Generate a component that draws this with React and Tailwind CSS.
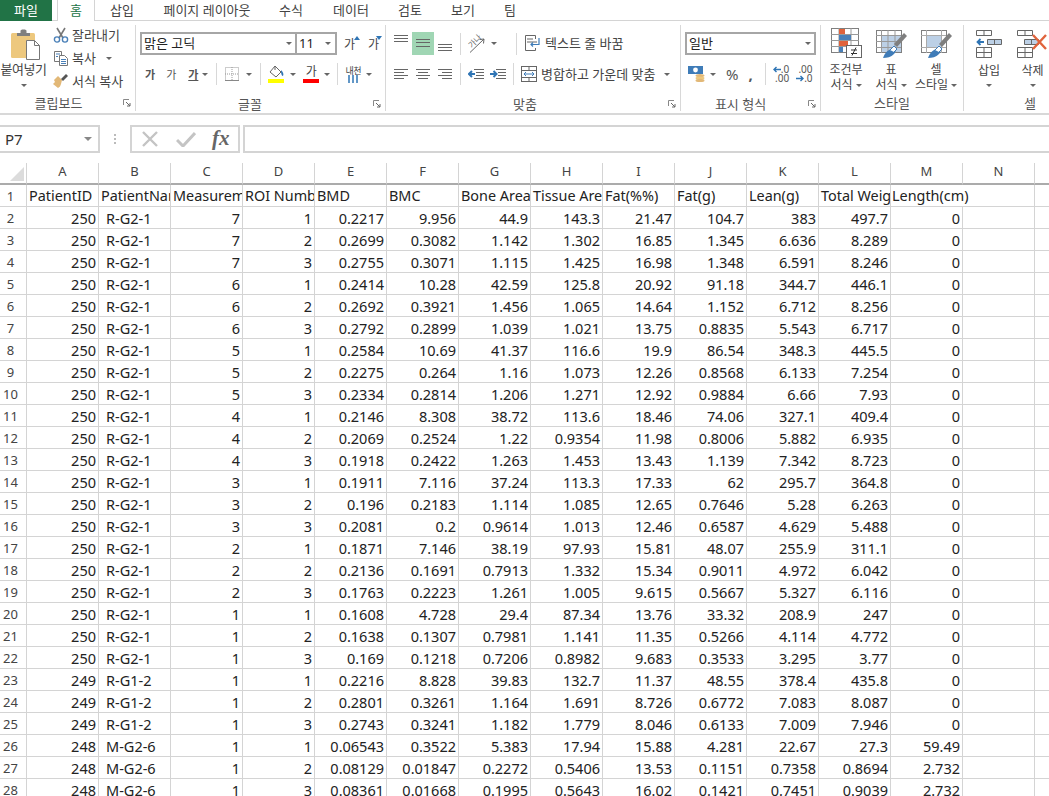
import React from "react";

const cols = ["A", "B", "C", "D", "E", "F", "G", "H", "I", "J", "K", "L", "M", "N"];
const headers = ["PatientID", "PatientName", "Measurement", "ROI Number", "BMD", "BMC", "Bone Area", "Tissue Area", "Fat(%%)", "Fat(g)", "Lean(g)", "Total Weight", "Length(cm)"];

const rows = [
  [250, "R-G2-1", 7, 1, "0.2217", "9.956", "44.9", "143.3", "21.47", "104.7", "383", "497.7", "0"],
  [250, "R-G2-1", 7, 2, "0.2699", "0.3082", "1.142", "1.302", "16.85", "1.345", "6.636", "8.289", "0"],
  [250, "R-G2-1", 7, 3, "0.2755", "0.3071", "1.115", "1.425", "16.98", "1.348", "6.591", "8.246", "0"],
  [250, "R-G2-1", 6, 1, "0.2414", "10.28", "42.59", "125.8", "20.92", "91.18", "344.7", "446.1", "0"],
  [250, "R-G2-1", 6, 2, "0.2692", "0.3921", "1.456", "1.065", "14.64", "1.152", "6.712", "8.256", "0"],
  [250, "R-G2-1", 6, 3, "0.2792", "0.2899", "1.039", "1.021", "13.75", "0.8835", "5.543", "6.717", "0"],
  [250, "R-G2-1", 5, 1, "0.2584", "10.69", "41.37", "116.6", "19.9", "86.54", "348.3", "445.5", "0"],
  [250, "R-G2-1", 5, 2, "0.2275", "0.264", "1.16", "1.073", "12.26", "0.8568", "6.133", "7.254", "0"],
  [250, "R-G2-1", 5, 3, "0.2334", "0.2814", "1.206", "1.271", "12.92", "0.9884", "6.66", "7.93", "0"],
  [250, "R-G2-1", 4, 1, "0.2146", "8.308", "38.72", "113.6", "18.46", "74.06", "327.1", "409.4", "0"],
  [250, "R-G2-1", 4, 2, "0.2069", "0.2524", "1.22", "0.9354", "11.98", "0.8006", "5.882", "6.935", "0"],
  [250, "R-G2-1", 4, 3, "0.1918", "0.2422", "1.263", "1.453", "13.43", "1.139", "7.342", "8.723", "0"],
  [250, "R-G2-1", 3, 1, "0.1911", "7.116", "37.24", "113.3", "17.33", "62", "295.7", "364.8", "0"],
  [250, "R-G2-1", 3, 2, "0.196", "0.2183", "1.114", "1.085", "12.65", "0.7646", "5.28", "6.263", "0"],
  [250, "R-G2-1", 3, 3, "0.2081", "0.2", "0.9614", "1.013", "12.46", "0.6587", "4.629", "5.488", "0"],
  [250, "R-G2-1", 2, 1, "0.1871", "7.146", "38.19", "97.93", "15.81", "48.07", "255.9", "311.1", "0"],
  [250, "R-G2-1", 2, 2, "0.2136", "0.1691", "0.7913", "1.332", "15.34", "0.9011", "4.972", "6.042", "0"],
  [250, "R-G2-1", 2, 3, "0.1763", "0.2223", "1.261", "1.005", "9.615", "0.5667", "5.327", "6.116", "0"],
  [250, "R-G2-1", 1, 1, "0.1608", "4.728", "29.4", "87.34", "13.76", "33.32", "208.9", "247", "0"],
  [250, "R-G2-1", 1, 2, "0.1638", "0.1307", "0.7981", "1.141", "11.35", "0.5266", "4.114", "4.772", "0"],
  [250, "R-G2-1", 1, 3, "0.169", "0.1218", "0.7206", "0.8982", "9.683", "0.3533", "3.295", "3.77", "0"],
  [249, "R-G1-2", 1, 1, "0.2216", "8.828", "39.83", "132.7", "11.37", "48.55", "378.4", "435.8", "0"],
  [249, "R-G1-2", 1, 2, "0.2801", "0.3261", "1.164", "1.691", "8.726", "0.6772", "7.083", "8.087", "0"],
  [249, "R-G1-2", 1, 3, "0.2743", "0.3241", "1.182", "1.779", "8.046", "0.6133", "7.009", "7.946", "0"],
  [248, "M-G2-6", 1, 1, "0.06543", "0.3522", "5.383", "17.94", "15.88", "4.281", "22.67", "27.3", "59.49"],
  [248, "M-G2-6", 1, 2, "0.08129", "0.01847", "0.2272", "0.5406", "13.53", "0.1151", "0.7358", "0.8694", "2.732"],
  [248, "M-G2-6", 1, 3, "0.08361", "0.01668", "0.1995", "0.5643", "16.02", "0.1421", "0.7451", "0.9039", "2.732"],
];

const tabs = [
  ["삽입", "w-[54px]"],
  ["페이지 레이아웃", "w-[116px]"],
  ["수식", "w-[52px]"],
  ["데이터", "w-[68px]"],
  ["검토", "w-[50px]"],
  ["보기", "w-[56px]"],
  ["팀", "w-[38px]"],
];

const Caret = ({ className = "" }) => (
  <span className={`inline-block w-0 h-0 border-x-[3px] border-x-transparent border-t-[3px] border-t-[#666] ${className}`} />
);

const Launcher = () => (
  <svg width="8" height="8" viewBox="0 0 8 8" className="shrink-0">
    <path d="M0.5 6V0.5H6" fill="none" stroke="#888" />
    <path d="M3 3L7 7M7 4V7H4" fill="none" stroke="#666" />
  </svg>
);

const Sep = ({ className = "" }) => <div className={`w-px h-[22px] bg-[#d8d8d8] shrink-0 ${className}`} />;

const GroupLabel = ({ children, className = "" }) => (
  <div className={`h-[16px] flex items-center text-[13px] text-[#555] leading-none ${className}`}>
    <span className="flex-1 text-center">{children}</span>
  </div>
);

function PasteIcon() {
  return (
    <svg width="30" height="31" viewBox="0 0 30 31">
      <rect x="0" y="4" width="24" height="25" rx="1.5" fill="#edc87e" />
      <path d="M6 7V4H9.5V1.5L11 0.5H14L15.5 1.5V4H19V7Z" fill="#7f7f7f" />
      <path d="M15.5 11.5H23.5L28.5 16.5V30.5H15.5Z" fill="#fff" stroke="#777" />
      <path d="M23.5 11.5V16.5H28.5" fill="none" stroke="#777" />
    </svg>
  );
}

function ScissorsIcon() {
  return (
    <svg width="16" height="16" viewBox="0 0 16 16">
      <path d="M4 1L10 11M12 1L6 11" stroke="#777" strokeWidth="1.6" fill="none" />
      <circle cx="4" cy="12.5" r="2.6" fill="none" stroke="#4a80b8" strokeWidth="1.4" />
      <circle cx="12" cy="12.5" r="2.6" fill="none" stroke="#4a80b8" strokeWidth="1.4" />
    </svg>
  );
}

function CopyIcon() {
  return (
    <svg width="16" height="16" viewBox="0 0 16 16">
      <path d="M1.5 1.5H8.5V11.5H1.5Z" fill="#fff" stroke="#777" />
      <path d="M6.5 5.5H11.5L14.5 8.5V15.5H6.5Z" fill="#fff" stroke="#777" />
      <path d="M3 4H7M3 6.5H5M8 9.5H13M8 11.5H13M8 13.5H13" stroke="#4a80b8" />
    </svg>
  );
}

function PainterIcon() {
  return (
    <svg width="16" height="16" viewBox="0 0 16 16">
      <path d="M9 7L5 3L1 7L2 9L0 11L5 15L7 13.5L8 11Z" fill="#e2b877" />
      <path d="M8 6L13 1L15 3L10 8Z" fill="#555" />
    </svg>
  );
}

// stacked lines of the alignment buttons: ys are measured from the top of the row
function AlignLines({ h, lines }) {
  return (
    <svg width="14" height={h} viewBox={`0 0 14 ${h}`} className="block">
      {lines.map(([y, x1, x2], i) => (
        <path key={i} d={`M${x1} ${y + 0.5}H${x2}`} stroke="#666" />
      ))}
    </svg>
  );
}

function OrientIcon() {
  return (
    <svg width="18" height="18" viewBox="0 0 18 18" className="overflow-visible">
      <path d="M2 17.5L16 4M16 4L11.5 4.5M16 4L15.5 8.5" fill="none" stroke="#666" />
      <text x="1" y="13" fontSize="8" fill="#666" transform="rotate(-45 3 10)">가나</text>
    </svg>
  );
}

function IndentIcon({ flip }) {
  return (
    <svg width="17" height="13" viewBox="0 0 17 13">
      <path d="M6 1.5H16M8 4.5H16M8 7.5H16M6 10.5H16" stroke="#666" />
      {flip ? (
        <path d="M0 6H6M3.5 3L6.5 6L3.5 9" fill="none" stroke="#2f75b5" strokeWidth="2" />
      ) : (
        <path d="M7 6H1M4 3L1 6L4 9" fill="none" stroke="#2f75b5" strokeWidth="2" />
      )}
    </svg>
  );
}

function WrapIcon() {
  return (
    <svg width="18" height="17" viewBox="0 0 18 17">
      <path d="M1.5 0.5H11.5V4M1.5 0.5V15.5H11.5V13" fill="none" stroke="#666" />
      <path d="M3 4H9M3 7H13" stroke="#666" />
      <path d="M15 3V9.5H7M9 7.5L7 9.5L9 11.5" fill="none" stroke="#3f7cb8" strokeWidth="1.2" />
    </svg>
  );
}

function MergeIcon() {
  return (
    <svg width="16" height="16" viewBox="0 0 16 16">
      <rect x="0.5" y="0.5" width="15" height="15" fill="#fff" stroke="#666" />
      <path d="M0 4.5H16M0 11.5H16M8 0V4M8 12V16" stroke="#666" />
      <path d="M3 8H13M5 6L3 8L5 10M11 6L13 8L11 10" fill="none" stroke="#3f7cb8" />
    </svg>
  );
}

function CurrencyIcon() {
  return (
    <svg width="18" height="16" viewBox="0 0 18 16">
      <rect x="0" y="0" width="15" height="8" fill="#3f7cb8" />
      <circle cx="7.5" cy="4" r="2.4" fill="#fff" />
      <ellipse cx="12" cy="9.5" rx="4.5" ry="1.6" fill="#e2b877" />
      <ellipse cx="12" cy="12" rx="4.5" ry="1.6" fill="#edc87e" />
      <ellipse cx="12" cy="14.4" rx="4.5" ry="1.6" fill="#e2b877" />
    </svg>
  );
}

const DecArrow = ({ right }) => (
  <svg width="8" height="7" viewBox="0 0 8 7" className="shrink-0">
    <path d={right ? "M0 3.5H7M4.5 1L7 3.5L4.5 6" : "M8 3.5H1M3.5 1L1 3.5L3.5 6"} fill="none" stroke="#2f75b5" strokeWidth="1.4" />
  </svg>
);

function CondFormatIcon() {
  return (
    <svg width="31" height="30" viewBox="0 0 31 30">
      <rect x="0.5" y="0.5" width="27" height="24" fill="#fff" stroke="#7f7f7f" />
      <path d="M8 0V25M20 0V25M0 6.5H28M0 12.5H28M0 18.5H28" stroke="#999" />
      <rect x="8" y="1" width="6" height="5" fill="#e0633c" />
      <rect x="8" y="7" width="12" height="5" fill="#4a80b8" />
      <rect x="8" y="13" width="9" height="5" fill="#e0633c" />
      <rect x="8" y="19" width="4" height="5" fill="#4a80b8" />
      <rect x="15.5" y="17.5" width="15" height="12" fill="#fff" stroke="#666" />
      <path d="M20 25.5H26M20 22H26M25 19.5L21 27.5" stroke="#333" fill="none" />
    </svg>
  );
}

function TableStyleIcon({ cell }) {
  return (
    <svg width="31" height="29" viewBox="0 0 31 29">
      <rect x="0.5" y="0.5" width="25" height="22" fill="#fff" stroke="#7f7f7f" />
      {cell ? (
        <>
          <path d="M0 5.5H25M0 17.5H25M5.5 0V23M20.5 0V23" stroke="#aaa" />
          <rect x="6" y="6" width="14" height="11" fill="#bcd0e6" />
        </>
      ) : (
        <>
          <rect x="6" y="6" width="19" height="16" fill="#bcd0e6" />
          <path d="M0 5.5H25M0 11.5H25M0 17.5H25M5.5 0V23M12 0V23M19 0V23" stroke="#999" />
        </>
      )}
      <path d="M18 14L28 3L31 6L21 17Z" fill="#7f7f7f" />
      <path d="M7 28C9 22 13 19 17 19C20 19 20 22 18 24C15 27 11 28 7 28Z" fill="#3f7cb8" />
      <path d="M14 20L18 16L21 19L18 22" fill="#fff" stroke="#3f7cb8" />
    </svg>
  );
}

function InsertIcon() {
  return (
    <svg width="26" height="28" viewBox="0 0 26 28">
      <path d="M0.5 0.5H15.5V5.5H0.5ZM8 0V5" fill="none" stroke="#666" />
      <path d="M11.5 9.5H25.5V14.5H11.5ZM18.5 9V14" fill="#bcd0e6" stroke="#666" />
      <path d="M8 12H1.5M4.5 9L1.5 12L4.5 15" fill="none" stroke="#2f75b5" strokeWidth="1.8" />
      <path d="M0.5 17.5H15.5V27.5H0.5ZM8 17V27M0 22.5H15" fill="none" stroke="#666" />
    </svg>
  );
}

function DeleteIcon() {
  return (
    <svg width="31" height="28" viewBox="0 0 31 28">
      <path d="M0.5 0.5H15.5V5.5H0.5ZM8 0V5" fill="none" stroke="#666" />
      <path d="M7.5 9.5H21.5V14.5H7.5ZM14.5 9V14" fill="#bcd0e6" stroke="#666" />
      <path d="M0.5 17.5H15.5V27.5H0.5ZM8 17V27M0 22.5H15" fill="none" stroke="#666" />
      <path d="M16 5L29 19M29 5L16 19" stroke="#e0633c" strokeWidth="2.4" />
    </svg>
  );
}

// small grey hangul glyph button, e.g. bold / italic / underline
const Ga = ({ className = "" }) => <span className={`text-[11px] leading-none text-[#555] ${className}`}>가</span>;

function Ribbon() {
  return (
    <div className="flex h-[94px] border-b-2 border-[#d8d8d8] text-[#444] text-[13px] leading-none">
      {/* clipboard */}
      <div className="w-[136px] shrink-0 flex flex-col border-r border-[#d8d8d8] mt-[4px] h-[86px]">
        <div className="flex h-[67px]">
          <div className="w-[48px] flex flex-col items-center">
            <div className="mt-[4px] ml-[3px]"><PasteIcon /></div>
            <span className="mt-[3px] -ml-[1px] text-[13px] tracking-[-0.5px] whitespace-nowrap">붙여넣기</span>
            <Caret className="mt-[8px]" />
          </div>
          <div className="ml-[5px] flex flex-col gap-[7px] pt-[2px]">
            <div className="flex items-center gap-[2px] h-[16px]"><ScissorsIcon /><span className="ml-[1px]">잘라내기</span></div>
            <div className="flex items-center gap-[2px] h-[16px]"><CopyIcon /><span className="ml-[1px]">복사</span><Caret className="ml-[8px]" /></div>
            <div className="flex items-center gap-[2px] h-[16px]"><PainterIcon /><span className="ml-[1px]">서식 복사</span></div>
          </div>
        </div>
        <div className="flex items-center mt-[3px] pr-[4px]">
          <GroupLabel className="flex-1 pr-[6px]">클립보드</GroupLabel>
          <Launcher />
        </div>
      </div>

      {/* font */}
      <div className="w-[250px] shrink-0 flex flex-col border-r border-[#d8d8d8] mt-[4px] h-[86px]">
        <div className="flex items-center mt-[7px] pl-[4px] h-[23px]">
          <div className="w-[157px] h-[23px] border-2 border-[#a6a6a6] flex items-center pl-[2px] pr-[3px] justify-between">
            <span className="text-[13px] text-[#222]">맑은 고딕</span>
            <Caret />
          </div>
          <div className="w-[40px] h-[23px] border-2 border-l-0 border-[#a6a6a6] flex items-center pl-[2px] pr-[4px] justify-between">
            <span className="text-[13px] text-[#222]">11</span>
            <Caret />
          </div>
          <div className="flex items-start ml-[7px]">
            <span className="text-[12px] mt-[3px]">가</span>
            <span className="w-0 h-0 -ml-[1px] border-x-[3px] border-x-transparent border-b-[4px] border-b-[#2f75b5]" />
          </div>
          <div className="flex items-start ml-[8px]">
            <span className="text-[12px] mt-[3px]">가</span>
            <span className="w-0 h-0 -ml-[3px] border-x-[3px] border-x-transparent border-t-[4px] border-t-[#2f75b5]" />
          </div>
        </div>
        <div className="flex items-center h-[22px] mt-[8px]">
          <Ga className="ml-[9px] font-semibold" />
          <Ga className="ml-[11px]" />
          <Ga className="ml-[12px] underline font-semibold" />
          <Caret className="ml-[4px]" />
          <Sep className="ml-[8px]" />
          <svg width="14" height="14" viewBox="0 0 14 14" className="ml-[8px]">
            <path d="M0.5 0.5H13.5V13.5H0.5ZM7 0V14M0 7H14" fill="none" stroke="#999" strokeDasharray="1 1" />
            <path d="M0 13.5H14" stroke="#888" />
          </svg>
          <Caret className="ml-[7px]" />
          <Sep className="ml-[8px]" />
          <svg width="17" height="18" viewBox="0 0 17 18" className="ml-[7px]">
            <path d="M7 1L13 7L8 12L2 7Z" fill="#fff" stroke="#666" />
            <path d="M7 1V5" stroke="#666" />
            <path d="M13 5C15 7 16 9 15 11C13 10.5 13 7 13 5Z" fill="#2f75b5" />
            <rect x="0" y="14" width="16" height="4" fill="#ffff00" />
          </svg>
          <Caret className="ml-[5px]" />
          <div className="ml-[7px] w-[16px] flex flex-col items-center">
            <span className="text-[12px] leading-[14px]">가</span>
            <span className="block w-[16px] h-[4px] bg-[#ff0000]" />
          </div>
          <Caret className="ml-[5px]" />
          <Sep className="ml-[7px]" />
          <div className="ml-[7px] w-[16px] flex flex-col items-center text-[#444]">
            <span className="text-[9px] leading-[9px] tracking-[-0.5px] whitespace-nowrap">내천</span>
            <svg width="12" height="8" viewBox="0 0 12 8"><path d="M2 0V8M6 0V8M10 0V8" stroke="#2f75b5" strokeWidth="1.5" /></svg>
          </div>
          <Caret className="ml-[5px]" />
        </div>
        <div className="flex items-center mt-[11px] pr-[4px]">
          <GroupLabel className="flex-1 pr-[9px]">글꼴</GroupLabel>
          <Launcher />
        </div>
      </div>

      {/* alignment */}
      <div className="w-[295px] shrink-0 flex flex-col border-r border-[#d8d8d8] mt-[4px] h-[86px]">
        <div className="flex items-center mt-[7px] h-[23px]">
          <div className="ml-[8px]"><AlignLines h={23} lines={[[3, 0, 14], [6, 0, 14], [9, 0, 14]]} /></div>
          <div className="ml-[4px] w-[22px] h-[23px] bg-[#a0d6b4] flex justify-center"><AlignLines h={23} lines={[[7, 0, 14], [10, 0, 14], [14, 0, 14]]} /></div>
          <div className="ml-[4px]"><AlignLines h={23} lines={[[12, 0, 14], [15, 0, 14], [18, 0, 14]]} /></div>
          <Sep className="ml-[8px]" />
          <div className="ml-[7px]"><OrientIcon /></div>
          <Caret className="ml-[5px]" />
          <Sep className="ml-[19px]" />
          <div className="ml-[7px]"><WrapIcon /></div>
          <span className="ml-[3px] whitespace-nowrap">텍스트 줄 바꿈</span>
        </div>
        <div className="flex items-center h-[22px] mt-[8px]">
          <div className="ml-[8px]"><AlignLines h={22} lines={[[6, 0, 14], [9, 0, 10], [12, 0, 14], [15, 0, 10]]} /></div>
          <div className="ml-[8px]"><AlignLines h={22} lines={[[6, 0, 14], [9, 2, 12], [12, 0, 14], [15, 2, 12]]} /></div>
          <div className="ml-[8px]"><AlignLines h={22} lines={[[6, 0, 14], [9, 4, 14], [12, 0, 14], [15, 4, 14]]} /></div>
          <Sep className="ml-[8px]" />
          <div className="ml-[7px]"><IndentIcon /></div>
          <div className="ml-[5px]"><IndentIcon flip /></div>
          <Sep className="ml-[6px]" />
          <div className="ml-[7px]"><MergeIcon /></div>
          <span className="ml-[4px] whitespace-nowrap">병합하고 가운데 맞춤</span>
          <Caret className="ml-[9px]" />
        </div>
        <div className="flex items-center mt-[11px] pr-[4px]">
          <GroupLabel className="flex-1 pr-[4px]">맞춤</GroupLabel>
          <Launcher />
        </div>
      </div>

      {/* number */}
      <div className="w-[140px] shrink-0 flex flex-col border-r border-[#d8d8d8] mt-[4px] h-[86px]">
        <div className="flex items-center mt-[7px] pl-[4px] h-[23px]">
          <div className="w-[131px] h-[23px] border-2 border-[#a6a6a6] flex items-center pl-[2px] pr-[3px] justify-between">
            <span className="text-[13px] text-[#222]">일반</span>
            <Caret />
          </div>
        </div>
        <div className="flex items-center h-[22px] mt-[8px]">
          <div className="ml-[7px]"><CurrencyIcon /></div>
          <Caret className="ml-[4px]" />
          <span className="ml-[10px] text-[15px] text-[#555]">%</span>
          <span className="ml-[10px] text-[15px] font-bold text-[#555]">,</span>
          <Sep className="ml-[12px]" />
          <div className="ml-[7px] flex flex-col items-end text-[10px] leading-[9px] text-[#555]">
            <div className="flex items-center"><DecArrow /><span>.0</span></div>
            <span>.00</span>
          </div>
          <div className="ml-[7px] flex flex-col items-end text-[10px] leading-[9px] text-[#555]">
            <span>.00</span>
            <div className="flex items-center"><DecArrow right /><span>.0</span></div>
          </div>
        </div>
        <div className="flex items-center mt-[11px] pr-[4px]">
          <GroupLabel className="flex-1 pr-[8px]">표시 형식</GroupLabel>
          <Launcher />
        </div>
      </div>

      {/* styles */}
      <div className="w-[143px] shrink-0 flex flex-col border-r border-[#d8d8d8] mt-[4px] h-[86px]">
        <div className="flex h-[67px] text-[12px]">
          <div className="w-[50px] flex flex-col items-center pt-[3px]">
            <div className="ml-[1px]"><CondFormatIcon /></div>
            <span className="mt-[6px]">조건부</span>
            <span className="mt-[3px] flex items-center gap-[3px]">서식<Caret /></span>
          </div>
          <div className="w-[40px] flex flex-col items-center pt-[5px]">
            <TableStyleIcon />
            <span className="mt-[5px]">표</span>
            <span className="mt-[3px] flex items-center gap-[3px]">서식<Caret /></span>
          </div>
          <div className="w-[50px] flex flex-col items-center pt-[5px]">
            <TableStyleIcon cell />
            <span className="mt-[5px]">셀</span>
            <span className="mt-[3px] flex items-center gap-[3px] whitespace-nowrap">스타일<Caret /></span>
          </div>
        </div>
        <GroupLabel className="mt-[3px]">스타일</GroupLabel>
      </div>

      {/* cells */}
      <div className="flex-1 flex flex-col mt-[4px] h-[86px] overflow-hidden">
        <div className="flex h-[67px] text-[12px]">
          <div className="ml-[12px] w-[26px] flex flex-col items-center pt-[5px]">
            <InsertIcon />
            <span className="mt-[7px] whitespace-nowrap">삽입</span>
            <Caret className="mt-[7px]" />
          </div>
          <div className="ml-[15px] w-[31px] flex flex-col items-center pt-[5px]">
            <DeleteIcon />
            <span className="mt-[7px] whitespace-nowrap">삭제</span>
            <Caret className="mt-[7px]" />
          </div>
        </div>
        <GroupLabel className="mt-[3px] pl-[47px]">셀</GroupLabel>
      </div>
    </div>
  );
}

function FormulaBar() {
  return (
    <div className="flex items-stretch h-[28px] mt-[10px]">
      <div className="w-[100px] border-2 border-l-0 border-[#d4d4d4] flex items-center justify-between pl-[5px] pr-[6px] text-[15px] text-[#333]">
        <span>P7</span>
        <Caret className="border-x-[4px] border-t-[4px] border-t-[#888]" />
      </div>
      <div className="w-[30px] flex items-center justify-center">
        <span className="flex flex-col gap-[2px]">
          <span className="block w-[2px] h-[2px] bg-[#bbb]" />
          <span className="block w-[2px] h-[2px] bg-[#bbb]" />
          <span className="block w-[2px] h-[2px] bg-[#bbb]" />
        </span>
      </div>
      <div className="w-[110px] border-2 border-[#d4d4d4] flex items-center pl-[9px]">
        <svg width="18" height="16" viewBox="0 0 18 16"><path d="M2 1L16 15M16 1L2 15" stroke="#c4c4c4" strokeWidth="2.4" /></svg>
        <svg width="20" height="16" viewBox="0 0 20 16" className="ml-[17px]"><path d="M1 9L7 15L19 2" fill="none" stroke="#c4c4c4" strokeWidth="3" /></svg>
        <span className="ml-[16px] text-[21px] italic font-bold text-[#666]" style={{ fontFamily: "'Liberation Serif', serif" }}>fx</span>
      </div>
      <div className="flex-1 ml-[3px] border-y-2 border-l-2 border-[#d4d4d4]" />
    </div>
  );
}

function Sheet() {
  return (
    <div className="mt-[10px] grid grid-cols-[27px_repeat(14,72px)_1fr] auto-rows-[22px] text-[14.5px] leading-none text-[#222]">
      <div className="border-b-2 border-[#ababab] border-r border-r-[#d4d4d4] flex items-end justify-end pr-[2px] pb-[2px]">
        <span className="w-0 h-0 border-l-[14px] border-l-transparent border-b-[14px] border-b-[#dcdcdc]" />
      </div>
      {cols.map((c) => (
        <div key={c} className="border-b-2 border-[#ababab] border-r border-r-[#d4d4d4] flex items-center justify-center pb-[3px] text-[13px] text-[#444]">
          {c}
        </div>
      ))}
      <div className="border-b-2 border-[#ababab]" />

      <div className="border-b border-r border-[#d4d4d4] flex items-center justify-center pr-[5px] pt-[1px] text-[13px] text-[#444]">1</div>
      {headers.map((h, i) =>
        i === 12 ? (
          <div key={h} className="border-b border-[#d4d4d4] flex items-center pl-[1px] pt-[2px] whitespace-nowrap text-[14.4px]">
            {h}
          </div>
        ) : (
          <div key={h} className="border-b border-r border-[#d4d4d4] flex items-center pl-[2px] pt-[2px] whitespace-nowrap overflow-hidden text-[14.4px]">
            {h}
          </div>
        )
      )}
      <div className="border-b border-r border-[#d4d4d4]" />
      <div className="border-b border-[#d4d4d4]" />

      {rows.map((row, r) => (
        <React.Fragment key={r}>
          <div className="border-b border-r border-[#d4d4d4] flex items-center justify-center pr-[5px] pt-[1px] text-[13px] text-[#444]">{r + 2}</div>
          {row.map((v, i) => (
            <div
              key={i}
              className={
                i === 1
                  ? "border-b border-r border-[#d4d4d4] flex items-center pl-[7px] pt-[1px] whitespace-nowrap"
                  : "border-b border-r border-[#d4d4d4] flex items-center justify-end pr-[2px] pt-[1px] whitespace-nowrap"
              }
            >
              {v}
            </div>
          ))}
          <div className="border-b border-r border-[#d4d4d4]" />
          <div className="border-b border-[#d4d4d4]" />
        </React.Fragment>
      ))}
    </div>
  );
}

export default function App() {
  return (
    <div
      className="w-[1049px] h-[796px] overflow-hidden bg-white"
      style={{ fontFamily: "'Noto Sans', 'Noto Sans CJK KR', sans-serif" }}
    >
      <div className="flex h-[21px] border-b border-[#d4d4d4] text-[13px] text-[#444] leading-none">
        <div className="w-[52px] h-[21px] bg-[#217346] text-white flex items-center justify-center">파일</div>
        <div className="ml-[5px] w-[38px] h-[21px] bg-white border-x border-[#d4d4d4] text-[#217346] flex items-center justify-center">홈</div>
        {tabs.map(([t, w]) => (
          <div key={t} className={`${w} flex items-center justify-center`}>{t}</div>
        ))}
      </div>
      <Ribbon />
      <FormulaBar />
      <Sheet />
    </div>
  );
}
